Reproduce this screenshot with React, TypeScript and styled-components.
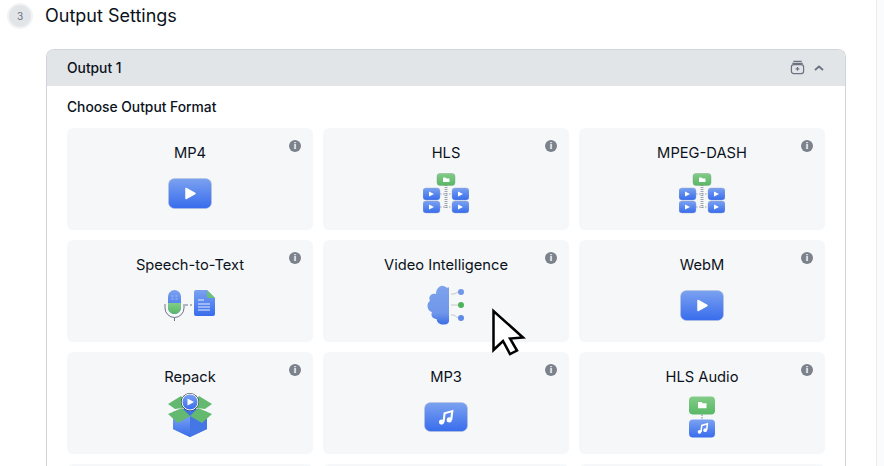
import React from 'react';
import styled, {createGlobalStyle} from 'styled-components';

const GlobalStyle = createGlobalStyle`
  html, body {
    margin: 0;
    height: 466px;
    overflow: hidden;
    background: #fff;
    font-family: Inter, "Liberation Sans", sans-serif;
    color: #111827;
  }
`;

const Page = styled.main`
  position: relative;
  width: 884px;
  height: 466px;
  display: flex;
  overflow: hidden;
`;

const Content = styled.div`
  width: 876px;
  flex: none;
  padding: 4px 0 0 8px;
  box-sizing: border-box;
`;

const ScrollTrack = styled.div`
  width: 8px;
  flex: none;
  background: #fafbfc;
  border-left: 1px solid #e9ebee;
  box-sizing: border-box;
`;

const SectionHead = styled.div`
  display: flex;
  align-items: center;
  gap: 14px;
  height: 24px;
`;

const StepBadge = styled.span`
  width: 22px;
  height: 22px;
  border-radius: 50%;
  background: #e2e5e8;
  box-shadow: 0 0 0 2px #f1f3f5;
  margin-left: 1px;
  display: flex;
  align-items: center;
  justify-content: center;
  font-size: 10px;
  color: #6b7280;
`;

const SectionTitle = styled.h2`
  margin: 0 0 1px;
  font-size: 18px;
  font-weight: 400;
  color: #0b1220;
`;

const Panel = styled.section`
  width: 800px;
  margin: 21px 0 0 38px;
  border: 1px solid #d1d5db;
  border-bottom: none;
  border-radius: 8px 8px 0 0;
  box-sizing: border-box;
  height: 500px;
`;

const PanelHead = styled.header`
  height: 36px;
  background: #e2e5e8;
  border-radius: 7px 7px 0 0;
  display: flex;
  align-items: center;
  justify-content: space-between;
  padding: 0 20px 1px;
  box-sizing: border-box;
`;

const PanelTitle = styled.span`
  font-size: 13.8px;
  font-weight: 500;
  color: #0b1220;
`;

const HeadActions = styled.div`
  display: flex;
  align-items: center;
  gap: 9px;
  margin-right: 1px;
`;

const PanelBody = styled.div`
  padding: 13px 20px 0;
`;

const Label = styled.div`
  font-size: 13.8px;
  font-weight: 500;
  line-height: 16px;
  margin-bottom: 13px;
  color: #0b1220;
`;

const Grid = styled.div`
  display: grid;
  grid-template-columns: repeat(3, 246px);
  grid-auto-rows: 102px;
  gap: 10px;
`;

const Card = styled.div`
  position: relative;
  background: #f6f7f9;
  border-radius: 6px;
  display: flex;
  flex-direction: column;
  align-items: center;
  padding-top: 16px;
  box-sizing: border-box;
`;

const CardTitle = styled.div`
  font-size: 14.7px;
  line-height: 18px;
  font-weight: 400;
  color: #0b1220;
  margin-bottom: 6px;
`;

const IconSlot = styled.div`
  height: 50px;
  display: flex;
  align-items: center;
  justify-content: center;
`;

const InfoDot = styled.span`
  position: absolute;
  top: 12px;
  right: 12px;
  width: 12px;
  height: 12px;
  border-radius: 50%;
  background: #7c828b;
  color: #fff;
  font-size: 9px;
  line-height: 12px;
  font-weight: 700;
  text-align: center;
`;

const Cursor = styled.svg`
  position: absolute;
  left: 490px;
  top: 308px;
`;

const Defs = () => (
  <svg width="0" height="0" style={{position: 'absolute'}}>
    <defs>
      <linearGradient id="blue" x1="0" y1="0" x2="0" y2="1">
        <stop offset="0" stopColor="#7ba2f0" />
        <stop offset="1" stopColor="#386cec" />
      </linearGradient>
      <linearGradient id="green" x1="0" y1="0" x2="0" y2="1">
        <stop offset="0" stopColor="#82cc88" />
        <stop offset="1" stopColor="#58b765" />
      </linearGradient>
      <linearGradient id="brain" x1="0" y1="0" x2="0" y2="1">
        <stop offset="0" stopColor="#7ea2ec" />
        <stop offset="0.7" stopColor="#6f97ea" />
        <stop offset="1" stopColor="#3b6ee6" />
      </linearGradient>
    </defs>
  </svg>
);

const PlayTile = () => (
  <svg width="44" height="31" viewBox="0 0 44 31">
    <rect x="0.5" y="0.5" width="43" height="30" rx="6" fill="url(#blue)" stroke="#b9c4d8" strokeWidth="0.6" />
    <path d="M18 10.5 L27 15.5 L18 20.5 Z" fill="#fff" stroke="#fff" strokeWidth="1.5" strokeLinejoin="round" />
  </svg>
);

const NoteGlyph = ({x, y, s}: {x: number; y: number; s: number}) => (
  <g transform={`translate(${x} ${y}) scale(${s})`}>
    <path d="M5 11 L6 3 L13 1 L12 9" fill="none" stroke="#fff" strokeWidth="1.9" />
    <circle cx="3.2" cy="11" r="2.3" fill="#fff" />
    <circle cx="10.2" cy="9" r="2.3" fill="#fff" />
  </g>
);

const MusicTile = () => (
  <svg width="44" height="30" viewBox="0 0 44 30">
    <rect x="0.5" y="0.5" width="43" height="29" rx="6" fill="url(#blue)" stroke="#b9c4d8" strokeWidth="0.6" />
    <NoteGlyph x={14} y={8} s={1.1} />
  </svg>
);

const smallTile = (x: number, y: number) => (
  <g key={`${x}-${y}`}>
    <rect x={x} y={y} width="17" height="12" rx="3" fill="url(#blue)" stroke="#8fa3c9" strokeWidth="0.4" />
    <path d={`M${x + 6} ${y + 3.5} l5 2.5 l-5 2.5 Z`} fill="#fff" />
  </g>
);

const LadderIcon = () => (
  <svg width="46" height="41" viewBox="0 0 46 41">
    <path d="M23 12 V36" stroke="#9ca3af" strokeWidth="3" strokeDasharray="1 1" />
    <path d="M17 21 H29 M17 34 H29" stroke="#9ca3af" strokeWidth="1" strokeDasharray="1.5 1.5" />
    <rect x="14" y="0.5" width="18" height="12" rx="3" fill="url(#green)" stroke="#7c9c82" strokeWidth="0.4" />
    <path d="M20 4.5 h2.5 l1 1 h3 v3.5 h-6.5 Z" fill="#fff" />
    {[[0, 15], [29, 15], [0, 28], [29, 28]].map(([x, y]) => smallTile(x, y))}
  </svg>
);

const SpeechIcon = () => (
  <svg width="54" height="32" viewBox="0 0 54 32">
    <rect x="5" y="1" width="13" height="24" rx="6.5" fill="url(#blue)" />
    <path d="M5 14 H18 V18.5 A6.5 6.5 0 0 1 5 18.5 Z" fill="url(#green)" />
    <path d="M8.5 7 h2 M12.5 7 h2 M8.5 10 h2 M12.5 10 h2" stroke="#a9c1f3" strokeWidth="1" />
    <path d="M2 15 V19 A9.5 9.5 0 0 0 21 19 V15" fill="none" stroke="#6f7680" strokeWidth="1" />
    <path d="M11.5 28.5 V32" stroke="#6f7680" strokeWidth="1" />
    <path d="M22 16 H29" stroke="#6f7680" strokeWidth="1" strokeDasharray="3 2" />
    <path d="M31 3 a2 2 0 0 1 2 -2 H44 L52 9 V25 a2 2 0 0 1 -2 2 H33 a2 2 0 0 1 -2 -2 Z" fill="url(#blue)" />
    <path d="M44 1 L52 9 H46 a2 2 0 0 1 -2 -2 Z" fill="#6cc077" />
    <path d="M35 11 H41 M35 15 H47 M35 18 H47 M35 21 H47" stroke="#e5edfd" strokeWidth="1.1" />
  </svg>
);

const BrainIcon = () => (
  <svg width="38" height="40" viewBox="0 0 38 40">
    <path d="M22 3 V36 C22 38 20 40 16 39.5 C12 39.5 10 37 9.5 34 C5 34 3.5 30 5 27 C0 26 -1 18 3 16 C1 12 4 8 9 9 C9 4 13 0 16 1 C18 1 19 2 20 3 C21 2 22 2 22 3 Z" fill="url(#brain)" />
    <path d="M24 9 H27 L31 7 M24 20 H31 M24 30 H27 L31 33" fill="none" stroke="#c3c8cf" strokeWidth="1" />
    <circle cx="34" cy="7" r="3" fill="#7097e8" />
    <circle cx="34" cy="20" r="3" fill="#4db45c" />
    <circle cx="34" cy="33" r="3" fill="#5f8ae6" />
  </svg>
);

const BoxIcon = () => (
  <svg width="46" height="48" viewBox="0 0 46 48">
    <path d="M6 19 L23 14 L40 19 V36 L23 44 L6 36 Z" fill="#3f71e3" />
    <path d="M6 22 L23 23 V44 L6 36 Z" fill="url(#blue)" />
    <path d="M40 22 L23 23 V44 L40 36 Z" fill="#4476e6" />
    <path d="M1 11 L14 3 L23 14 L8 16 Z" fill="#62b96f" />
    <path d="M45 11 L32 3 L23 14 L38 16 Z" fill="#62b96f" />
    <path d="M1 21 L15 15 L23 23 L11 30 Z" fill="#62b96f" />
    <path d="M45 21 L31 15 L23 23 L35 30 Z" fill="#62b96f" />
    <circle cx="23" cy="9" r="9" fill="#1f2937" />
    <circle cx="23" cy="9" r="8" fill="url(#blue)" stroke="#fff" strokeWidth="1" />
    <path d="M20.5 5.5 L27 9 L20.5 12.5 Z" fill="#fff" />
  </svg>
);

const HlsAudioIcon = () => (
  <svg width="28" height="42" viewBox="0 0 28 42">
    <rect x="1" y="0.5" width="26" height="18" rx="4" fill="url(#green)" />
    <path d="M10 6 h3.5 l1.2 1.2 h3.8 v5 h-8.5 Z" fill="#fff" />
    <path d="M14 18.5 V24" stroke="#7b828c" strokeWidth="1" strokeDasharray="1.5 1" />
    <rect x="1" y="23.5" width="26" height="18" rx="4" fill="url(#blue)" />
    <NoteGlyph x={9} y={27} s={0.8} />
  </svg>
);

const formats: {name: string; icon: React.ReactNode}[] = [
  {name: 'MP4', icon: <PlayTile />},
  {name: 'HLS', icon: <LadderIcon />},
  {name: 'MPEG-DASH', icon: <LadderIcon />},
  {name: 'Speech-to-Text', icon: <SpeechIcon />},
  {name: 'Video Intelligence', icon: <BrainIcon />},
  {name: 'WebM', icon: <PlayTile />},
  {name: 'Repack', icon: <BoxIcon />},
  {name: 'MP3', icon: <MusicTile />},
  {name: 'HLS Audio', icon: <HlsAudioIcon />},
  {name: '', icon: null},
  {name: '', icon: null},
  {name: '', icon: null},
];

const App = () => {
  return (
    <Page>
      <GlobalStyle />
      <Defs />
      <Content>
        <SectionHead>
          <StepBadge>3</StepBadge>
          <SectionTitle>Output Settings</SectionTitle>
        </SectionHead>
        <Panel>
          <PanelHead>
            <PanelTitle>Output 1</PanelTitle>
            <HeadActions>
              <svg width="15" height="15" viewBox="0 0 16 16" fill="none" stroke="#6b7280" strokeWidth="1.3">
                <path d="M3.5 1.5 H12.5 M2.5 3.5 H13.5" />
                <rect x="1.5" y="5" width="13" height="9.5" rx="2.5" />
                <path d="M8 7.5 V11.5 M6 9.5 H10" />
              </svg>
              <svg width="10" height="6" viewBox="0 0 10 6" fill="none" stroke="#6b7280" strokeWidth="1.8">
                <path d="M1 5 L5 1.5 L9 5" />
              </svg>
            </HeadActions>
          </PanelHead>
          <PanelBody>
            <Label>Choose Output Format</Label>
            <Grid>
              {formats.map((f, i) => (
                <Card key={i}>
                  <CardTitle>{f.name}</CardTitle>
                  <IconSlot>{f.icon}</IconSlot>
                  {f.name && <InfoDot>i</InfoDot>}
                </Card>
              ))}
            </Grid>
          </PanelBody>
        </Panel>
      </Content>
      <ScrollTrack />
      <Cursor width="38" height="50" viewBox="0 0 38 50">
        <path d="M3.5 3 L3.5 42 L13 33 L20 46 L27 42.5 L20 30.5 L33 29.5 Z" fill="#fff" stroke="#000" strokeWidth="2.5" strokeLinejoin="miter" />
      </Cursor>
    </Page>
  );
};

export default App;
